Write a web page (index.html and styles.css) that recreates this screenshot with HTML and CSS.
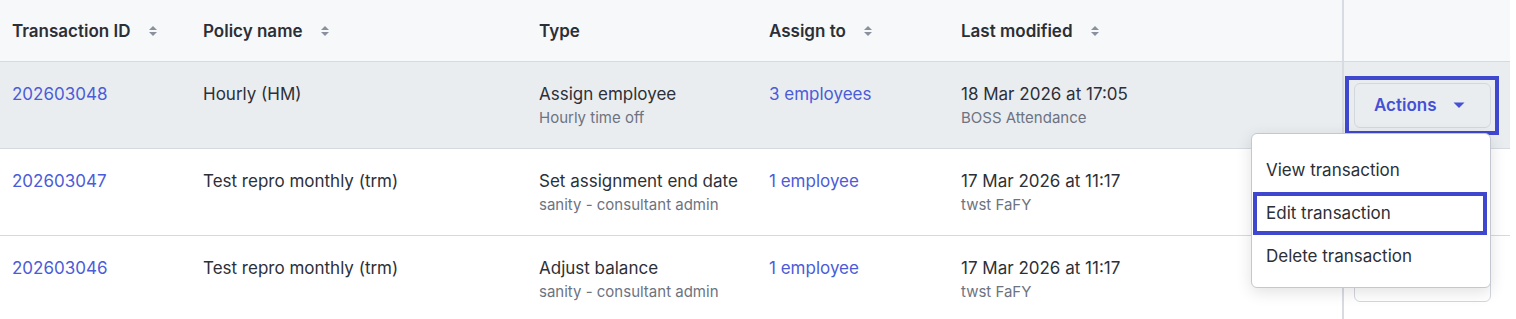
FILE: index.html
```html
<!DOCTYPE html>
<html lang="en">
<head>
  <meta charset="UTF-8">
  <meta name="viewport" content="width=device-width, initial-scale=1.0">
  <title>Transactions</title>
  <link rel="stylesheet" href="styles.css">
</head>
<body>
  <div class="table">
    <div class="row head">
      <div class="cell">Transaction ID <svg class="sort" width="8" height="12" viewBox="0 0 8 12"><path d="M0 5 L4 1 L8 5 Z M0 7 L8 7 L4 11 Z"/></svg></div>
      <div class="cell">Policy name <svg class="sort" width="8" height="12" viewBox="0 0 8 12"><path d="M0 5 L4 1 L8 5 Z M0 7 L8 7 L4 11 Z"/></svg></div>
      <div class="cell">Type</div>
      <div class="cell">Assign to <svg class="sort" width="8" height="12" viewBox="0 0 8 12"><path d="M0 5 L4 1 L8 5 Z M0 7 L8 7 L4 11 Z"/></svg></div>
      <div class="cell">Last modified <svg class="sort" width="8" height="12" viewBox="0 0 8 12"><path d="M0 5 L4 1 L8 5 Z M0 7 L8 7 L4 11 Z"/></svg></div>
      <div class="cell actions"></div>
    </div>

    <div class="row hover">
      <div class="cell"><a class="link" href="#">202603048</a></div>
      <div class="cell">Hourly (HM)</div>
      <div class="cell"><div>Assign employee</div><div class="sub">Hourly time off</div></div>
      <div class="cell"><a class="link" href="#">3 employees</a></div>
      <div class="cell"><div>18 Mar 2026 at 17:05</div><div class="sub">BOSS Attendance</div></div>
      <div class="cell actions">
        <div class="action-wrap">
          <button class="btn focused">Actions <svg width="12" height="7" viewBox="0 0 12 7"><path d="M0.5 0.5 H11.5 L6 6 Z"/></svg></button>
          <div class="menu">
            <div class="menu-item">View transaction</div>
            <div class="menu-item focused">Edit transaction</div>
            <div class="menu-item">Delete transaction</div>
          </div>
        </div>
      </div>
    </div>

    <div class="row">
      <div class="cell"><a class="link" href="#">202603047</a></div>
      <div class="cell">Test repro monthly (trm)</div>
      <div class="cell"><div>Set assignment end date</div><div class="sub">sanity - consultant admin</div></div>
      <div class="cell"><a class="link" href="#">1 employee</a></div>
      <div class="cell"><div>17 Mar 2026 at 11:17</div><div class="sub">twst FaFY</div></div>
      <div class="cell actions">
        <div class="action-wrap">
          <button class="btn">Actions <svg width="12" height="7" viewBox="0 0 12 7"><path d="M0.5 0.5 H11.5 L6 6 Z"/></svg></button>
        </div>
      </div>
    </div>

    <div class="row">
      <div class="cell"><a class="link" href="#">202603046</a></div>
      <div class="cell">Test repro monthly (trm)</div>
      <div class="cell"><div>Adjust balance</div><div class="sub">sanity - consultant admin</div></div>
      <div class="cell"><a class="link" href="#">1 employee</a></div>
      <div class="cell"><div>17 Mar 2026 at 11:17</div><div class="sub">twst FaFY</div></div>
      <div class="cell actions">
        <div class="action-wrap">
          <button class="btn">Actions <svg width="12" height="7" viewBox="0 0 12 7"><path d="M0.5 0.5 H11.5 L6 6 Z"/></svg></button>
        </div>
      </div>
    </div>
  </div>
</body>
</html>
```

FILE: styles.css
```css
body {
  margin: 0;
  font-family: 'Inter', 'Liberation Sans', sans-serif;
  font-size: 17px;
  color: #2c3038;
  background: white;
  overflow: hidden;
}
.table {
  width: 1510px;
}
.row {
  display: grid;
  grid-template-columns: 191px 336px 230px 192px 393px 168px;
  height: 86px;
  border-bottom: 1px solid #d5dae1;
}
.row.head {
  height: 61px;
  background: #f7f8fa;
}
.row.hover {
  background: #eaedf0;
}
.cell {
  padding: 20px 12px 0;
  line-height: 24px;
  white-space: nowrap;
}
.head .cell {
  padding: 0 12px;
  display: flex;
  align-items: center;
  font-weight: 600;
  color: #2b2f36;
}
.sort {
  margin-left: 18px;
  fill: #8b919c;
}
.sub {
  font-size: 15px;
  line-height: 20px;
  margin-top: 2px;
  color: #6d7380;
}
.link {
  color: #4b5cd8;
  text-decoration: none;
}
.cell.actions {
  border-left: 2px solid #d8dce2;
  padding: 0 0 0 10px;
  display: flex;
  align-items: center;
}
.action-wrap {
  position: relative;
}
.btn {
  position: relative;
  width: 137px;
  height: 45px;
  padding: 0 0 0 19px;
  display: flex;
  align-items: center;
  gap: 16px;
  border: 1px solid #d3d7de;
  border-radius: 6px;
  background: transparent;
  font-family: inherit;
  font-size: 17px;
  font-weight: 600;
  color: #4451d4;
  cursor: pointer;
}
.btn svg {
  fill: #4451d4;
}
.btn.focused::after {
  content: "";
  position: absolute;
  top: -8px;
  bottom: -8px;
  left: -10px;
  right: -9px;
  border: 4px solid #3f47cf;
}
.menu {
  position: absolute;
  top: calc(100% + 5px);
  right: 0;
  z-index: 10;
  width: 238px;
  padding: 15px 0 9px;
  background: white;
  border: 1px solid #c3c8d0;
  border-radius: 6px;
  box-shadow: 0 4px 16px rgba(0, 0, 0, 0.12);
}
.menu-item {
  height: 43px;
  margin: 0 3px 0 1px;
  padding-left: 13px;
  display: flex;
  align-items: center;
  color: #2b2f36;
  white-space: nowrap;
}
.menu-item.focused {
  box-shadow: inset 0 0 0 4px #3f47cf;
}
```
